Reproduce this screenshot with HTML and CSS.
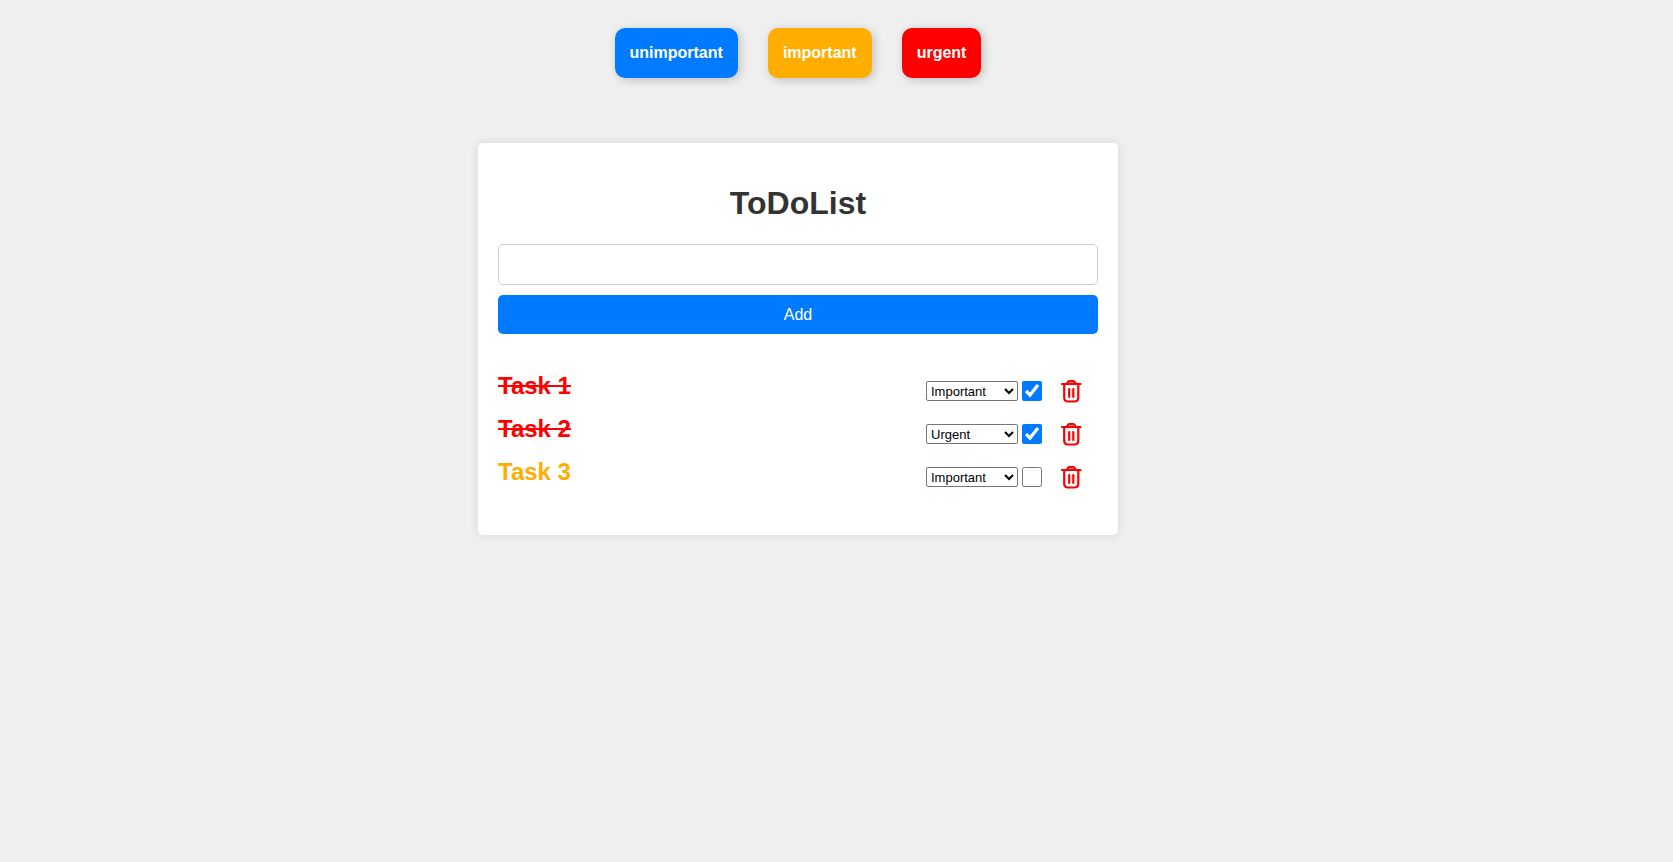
FILE: index.html
```html
<!DOCTYPE html>
<html lang="en">
<head>
<meta charset="utf-8">
<meta name="viewport" content="width=device-width, initial-scale=1">
<title>ToDoList</title>
<link rel="stylesheet" href="styles.css">
</head>
<body>
<svg class="sprite" aria-hidden="true">
  <symbol id="trash" viewBox="0 0 24 24" fill="none" stroke="currentColor" stroke-width="2.200" stroke-linecap="round" stroke-linejoin="round">
    <path fill="#ff9c9c" d="M7 4.500 8 2.800Q8.500 2 9.500 2h3.500Q14 2 14.500 2.800L15.500 4.500"/>
    <path d="M2 5h18.500M4.200 5.500V18.500Q4.200 22.500 8 22.500h6.500Q18.300 22.500 18.300 18.500V5.500M9.200 10v8M13.300 10v8"/>
  </symbol>
</svg>
<ul class="legend">
  <li class="badge badge-unimportant">unimportant</li>
  <li class="badge badge-important">important</li>
  <li class="badge badge-urgent">urgent</li>
</ul>
<main class="card">
  <h1 class="title">ToDoList</h1>
  <form class="add-form">
    <input class="add-input" type="text" aria-label="New task">
    <button class="add-button" type="button">Add</button>
  </form>
  <ul class="tasks">
    <li class="task">
      <label class="name urgent done" for="task1">Task 1</label>
      <div class="controls">
        <select class="priority" aria-label="Priority of Task 1"><option>Unimportant</option><option selected>Important</option><option>Urgent</option></select>
        <input class="check" type="checkbox" id="task1" checked>
        <button class="delete" type="button" aria-label="Delete Task 1"><svg class="icon"><use href="#trash"/></svg></button>
      </div>
    </li>
    <li class="task">
      <label class="name urgent done" for="task2">Task 2</label>
      <div class="controls">
        <select class="priority" aria-label="Priority of Task 2"><option>Unimportant</option><option>Important</option><option selected>Urgent</option></select>
        <input class="check" type="checkbox" id="task2" checked>
        <button class="delete" type="button" aria-label="Delete Task 2"><svg class="icon"><use href="#trash"/></svg></button>
      </div>
    </li>
    <li class="task">
      <label class="name important" for="task3">Task 3</label>
      <div class="controls">
        <select class="priority" aria-label="Priority of Task 3"><option>Unimportant</option><option selected>Important</option><option>Urgent</option></select>
        <input class="check" type="checkbox" id="task3">
        <button class="delete" type="button" aria-label="Delete Task 3"><svg class="icon"><use href="#trash"/></svg></button>
      </div>
    </li>
  </ul>
</main>
</body>
</html>
```
FILE: styles.css
```css
* {
  box-sizing: border-box;
}

body {
  margin: 0;
  padding: 28px 77px 28px 0;
  background: #efefef;
  font-family: "Liberation Sans", Arial, sans-serif;
  font-size: 16px;
}

.sprite {
  display: none;
}

.legend {
  display: flex;
  justify-content: center;
  gap: 30px;
  margin: 0 0 65px;
  padding: 0;
  list-style: none;
}

.badge {
  padding: 15px;
  border-radius: 10px;
  color: #fff;
  font-weight: bold;
  line-height: 20px;
  box-shadow: 2px 2px 10px rgba(0, 0, 0, 0.2);
}

.badge-unimportant {
  background: #007bff;
}

.badge-important {
  background: #ffae00;
}

.badge-urgent {
  background: #f00;
}

.card {
  max-width: 640px;
  margin: 0 auto;
  padding: 20px 20px 34px;
  border-radius: 5px;
  background: #fff;
  box-shadow: 0 0 10px rgba(0, 0, 0, 0.1);
}

.title {
  margin: 21px 0 22px;
  color: #333;
  font-size: 32px;
  line-height: 38px;
  text-align: center;
}

.add-form {
  display: flex;
  flex-direction: column;
  gap: 10px;
}

.add-input {
  height: 41px;
  padding: 10px;
  border: 1px solid #ccc;
  border-radius: 5px;
  background: #fff;
  font: inherit;
}

.add-button {
  height: 39px;
  padding: 0;
  border: 0;
  border-radius: 5px;
  background: #007bff;
  color: #fff;
  font: inherit;
  cursor: pointer;
}

.tasks {
  margin: 38px 0 0;
  padding: 0;
  list-style: none;
}

.task {
  display: flex;
  justify-content: space-between;
  min-height: 43px;
}

.name {
  height: 28px;
  font-size: 24px;
  font-weight: bold;
  line-height: 28px;
}

.urgent {
  color: #f00;
}

.important {
  color: #ffae00;
}

.done {
  text-decoration: line-through;
}

.controls {
  display: flex;
  align-items: center;
  height: 24px;
  margin-top: 7px;
  padding-right: 14px;
}

.priority {
  width: 92px;
  height: 20px;
  margin: 0 4px 0 0;
  border: 1px solid #767676;
  border-radius: 2px;
  background: #fff;
  color: #000;
  font-family: inherit;
  font-size: 13px;
}

.check {
  width: 20px;
  height: 20px;
  margin: 0 18px 0 0;
  accent-color: #007bff;
}

.delete {
  display: flex;
  padding: 0;
  border: 0;
  background: none;
  color: #f00;
  cursor: pointer;
}

.icon {
  width: 24px;
  height: 24px;
}
```
